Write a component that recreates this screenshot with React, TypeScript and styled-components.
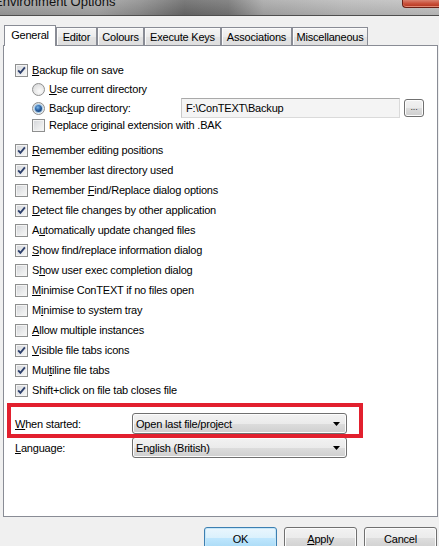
import React from 'react';
import styled, { createGlobalStyle, css } from 'styled-components';

const Global = createGlobalStyle`
  html, body { margin: 0; padding: 0; background: #f0f0f0; }
  body {
    font-family: "Liberation Sans", Arial, sans-serif;
    font-size: 11px;
    color: #000;
  }
  #root { width: 439px; height: 546px; overflow: hidden; }
`;

const Window = styled.div`
  position: relative;
  width: 439px;
  height: 546px;
  overflow: hidden;
  background: #f0f0f0;
  display: flex;
  flex-direction: column;
  letter-spacing: -0.2px;
`;

const TitleBar = styled.div`
  height: 15px;
  flex: none;
  border-bottom: 1px solid #4e4e4e;
  display: flex;
  align-items: flex-start;
  justify-content: space-between;
  overflow: hidden;
  background:
    linear-gradient(to bottom, rgba(255, 255, 255, 0.12), rgba(0, 0, 0, 0.08)),
    linear-gradient(
      to right,
      #9c9c9c 0%,
      #a6a6a6 22%,
      #8e8e8e 32%,
      #6a6a6a 42%,
      #767676 52%,
      #a8a8a8 60%,
      #bababa 78%,
      #c2c2c2 100%
    );
`;

const TitleText = styled.span`
  font-size: 13px;
  line-height: 13px;
  letter-spacing: 0;
  color: #121212;
  margin: -5px 0 0 -6px;
  white-space: nowrap;
`;

const CloseButton = styled.div`
  width: 37px;
  height: 8px;
  flex: none;
  box-sizing: border-box;
  border: 1px solid #6b1e14;
  border-top: none;
  border-right: none;
  border-radius: 0 0 0 4px;
  background: linear-gradient(#d9806e 0%, #c9503a 50%, #b3331d 100%);
  box-shadow: inset 0 -1px 0 rgba(255, 190, 170, 0.6);
`;

const TabStrip = styled.div`
  display: flex;
  align-items: flex-end;
  height: 20px;
  margin-top: 9px;
  padding-left: 4px;
  flex: none;
`;

const Tab = styled.div<{ $w: number; $active?: boolean }>`
  width: ${(p) => p.$w}px;
  box-sizing: border-box;
  height: 18px;
  border: 1px solid #898c95;
  border-bottom: none;
  background: linear-gradient(#f5f5f5 0%, #ececec 50%, #e3e3e3 51%, #dedede 100%);
  box-shadow: inset 1px 1px 0 #fbfbfb;
  display: flex;
  align-items: center;
  justify-content: center;
  padding-top: 1px;
  white-space: nowrap;
  ${(p) =>
    p.$active &&
    css`
      height: 21px;
      margin-bottom: -1px;
      background: #fff;
      box-shadow: none;
      position: relative;
      z-index: 1;
      align-items: flex-start;
      padding-top: 3px;
    `}
`;

const Panel = styled.div`
  box-sizing: border-box;
  height: 472px;
  margin: 0 1px 0 3px;
  background: #fff;
  border: 1px solid #898c95;
  padding: 14px 0 0 11px;
  display: flex;
  flex-direction: column;
  flex: none;
`;

const Row = styled.div<{ $h?: number; $mt?: number; $indent?: boolean }>`
  display: flex;
  align-items: center;
  gap: 4px;
  height: ${(p) => p.$h ?? 20}px;
  margin-top: ${(p) => p.$mt ?? 0}px;
  padding-left: ${(p) => (p.$indent ? 17 : 0)}px;
  white-space: nowrap;
  flex: none;
`;

const Box = styled.span`
  width: 13px;
  height: 13px;
  box-sizing: border-box;
  flex: none;
  border: 1px solid #8e8f8f;
  background: linear-gradient(135deg, #d2d4d8 0%, #e8e9ea 55%, #f8f8f8 100%);
  box-shadow: inset 0 0 0 1px #f3f3f3;
  display: flex;
  align-items: center;
  justify-content: center;
`;

const RadioCircle = styled.span`
  width: 13px;
  height: 13px;
  box-sizing: border-box;
  flex: none;
  border-radius: 50%;
  border: 1px solid #8e8f8f;
  background: radial-gradient(circle at 60% 65%, #fbfbfb 0%, #e6e6e6 55%, #cfd0d3 100%);
  display: flex;
  align-items: center;
  justify-content: center;
`;

const RadioDot = styled.span`
  width: 7px;
  height: 7px;
  border-radius: 50%;
  background: radial-gradient(circle at 40% 35%, #7fb8e8 0%, #2b63a6 45%, #0f2c58 100%);
  box-shadow: 0 0 0 1px #9cc8ec;
`;

const Key = styled.span`
  text-decoration: underline;
`;

const RadioLabel = styled.span`
  width: 128px;
  flex: none;
`;

const TextField = styled.div`
  box-sizing: border-box;
  width: 219px;
  height: 20px;
  flex: none;
  border: 1px solid #dadada;
  border-top-color: #a9a9a9;
  border-left-color: #c8c8c8;
  background: #f4f4f4;
  padding-left: 4px;
  display: flex;
  align-items: center;
`;

const buttonFace = css`
  box-sizing: border-box;
  border: 1px solid #707070;
  border-radius: 3px;
  background: linear-gradient(#f2f2f2 0%, #ebebeb 50%, #dddddd 50%, #cfcfcf 100%);
  box-shadow: inset 0 0 0 1px #fcfcfc;
`;

const EllipsisButton = styled.div`
  ${buttonFace}
  width: 20px;
  height: 18px;
  flex: none;
  display: flex;
  align-items: center;
  justify-content: center;
  font-size: 9px;
  padding-bottom: 3px;
  color: #333;
`;

const FieldLabel = styled.span`
  width: 117px;
  flex: none;
`;

const FieldRow = styled(Row)`
  gap: 0;
  padding-left: 0;
`;

const Combo = styled.div`
  ${buttonFace}
  width: 215px;
  height: 21px;
  flex: none;
  display: flex;
  align-items: center;
  justify-content: space-between;
  padding: 0 6px 0 3px;
`;

const ButtonRow = styled.div`
  display: flex;
  justify-content: flex-end;
  gap: 7px;
  padding: 10px 2px 0 0;
`;

const PushButton = styled.div<{ $default?: boolean }>`
  ${buttonFace}
  width: 73px;
  height: 23px;
  display: flex;
  align-items: center;
  justify-content: center;
  ${(p) =>
    p.$default &&
    css`
      border-color: #3c7fb1;
      background: linear-gradient(#eaf6fd 0%, #d9f0fc 50%, #bee6fd 50%, #a7d9f5 100%);
      box-shadow: inset 0 0 0 1px #c5e6f8;
    `}
`;

const Annotation = styled.div`
  position: absolute;
  left: 7px;
  top: 403px;
  width: 356px;
  height: 35px;
  box-sizing: border-box;
  border: 4px solid #e2202e;
  z-index: 2;
`;

const CheckMark = () => (
  <svg width="11" height="11" viewBox="0 0 11 11">
    <path d="M2.2 5.4 L4.4 7.8 L8.9 2.4" fill="none" stroke="#2c3f6c" strokeWidth="1.9" />
  </svg>
);

const Arrow = () => (
  <svg width="7" height="4" viewBox="0 0 7 4">
    <path d="M0 0 H7 L3.5 4 Z" fill="#000" />
  </svg>
);

type CheckProps = {
  on?: boolean;
  indent?: boolean;
  h?: number;
  mt?: number;
  children: React.ReactNode;
};

const Check = ({ on, indent, h, mt, children }: CheckProps) => (
  <Row $indent={indent} $h={h} $mt={mt}>
    <Box>{on && <CheckMark />}</Box>
    <span>{children}</span>
  </Row>
);

const tabs = [
  { label: 'General', w: 52, active: true },
  { label: 'Editor', w: 41 },
  { label: 'Colours', w: 47 },
  { label: 'Execute Keys', w: 77 },
  { label: 'Associations', w: 71 },
  { label: 'Miscellaneous', w: 76 },
];

export default function App() {
  return (
    <>
      <Global />
      <Window>
        <TitleBar>
          <TitleText>Environment Options</TitleText>
          <CloseButton />
        </TitleBar>

        <TabStrip>
          {tabs.map((t) => (
            <Tab key={t.label} $w={t.w} $active={t.active}>
              {t.label}
            </Tab>
          ))}
        </TabStrip>

        <Panel>
          <Check on>
            <Key>B</Key>ackup file on save
          </Check>
          <Row $indent $h={18}>
            <RadioCircle />
            <span>
              <Key>U</Key>se current directory
            </span>
          </Row>
          <Row $indent>
            <RadioCircle>
              <RadioDot />
            </RadioCircle>
            <RadioLabel>
              Bac<Key>k</Key>up directory:
            </RadioLabel>
            <TextField>F:\ConTEXT\Backup</TextField>
            <EllipsisButton>...</EllipsisButton>
          </Row>
          <Check indent h={14}>
            Replace <Key>o</Key>riginal extension with .BAK
          </Check>

          <Check on mt={8}>
            <Key>R</Key>emember editing positions
          </Check>
          <Check on>
            R<Key>e</Key>member last directory used
          </Check>
          <Check>
            Remember <Key>F</Key>ind/Replace dialog options
          </Check>
          <Check on>
            <Key>D</Key>etect file changes by other application
          </Check>
          <Check>
            A<Key>u</Key>tomatically update changed files
          </Check>
          <Check on>
            <Key>S</Key>how find/replace information dialog
          </Check>
          <Check>
            S<Key>h</Key>ow user exec completion dialog
          </Check>
          <Check>
            <Key>M</Key>inimise ConTEXT if no files open
          </Check>
          <Check>
            M<Key>i</Key>nimise to system tray
          </Check>
          <Check>
            <Key>A</Key>llow multiple instances
          </Check>
          <Check on>
            <Key>V</Key>isible file tabs icons
          </Check>
          <Check on>
            Mul<Key>t</Key>iline file tabs
          </Check>
          <Check on>Shift+click on file tab closes file</Check>

          <FieldRow $h={21} $mt={13}>
            <FieldLabel>
              <Key>W</Key>hen started:
            </FieldLabel>
            <Combo>
              <span>Open last file/project</span>
              <Arrow />
            </Combo>
          </FieldRow>
          <FieldRow $h={21} $mt={3}>
            <FieldLabel>
              <Key>L</Key>anguage:
            </FieldLabel>
            <Combo>
              <span>English (British)</span>
              <Arrow />
            </Combo>
          </FieldRow>
        </Panel>

        <ButtonRow>
          <PushButton $default>OK</PushButton>
          <PushButton>
            <Key>A</Key>pply
          </PushButton>
          <PushButton>Cancel</PushButton>
        </ButtonRow>

        <Annotation />
      </Window>
    </>
  );
}
